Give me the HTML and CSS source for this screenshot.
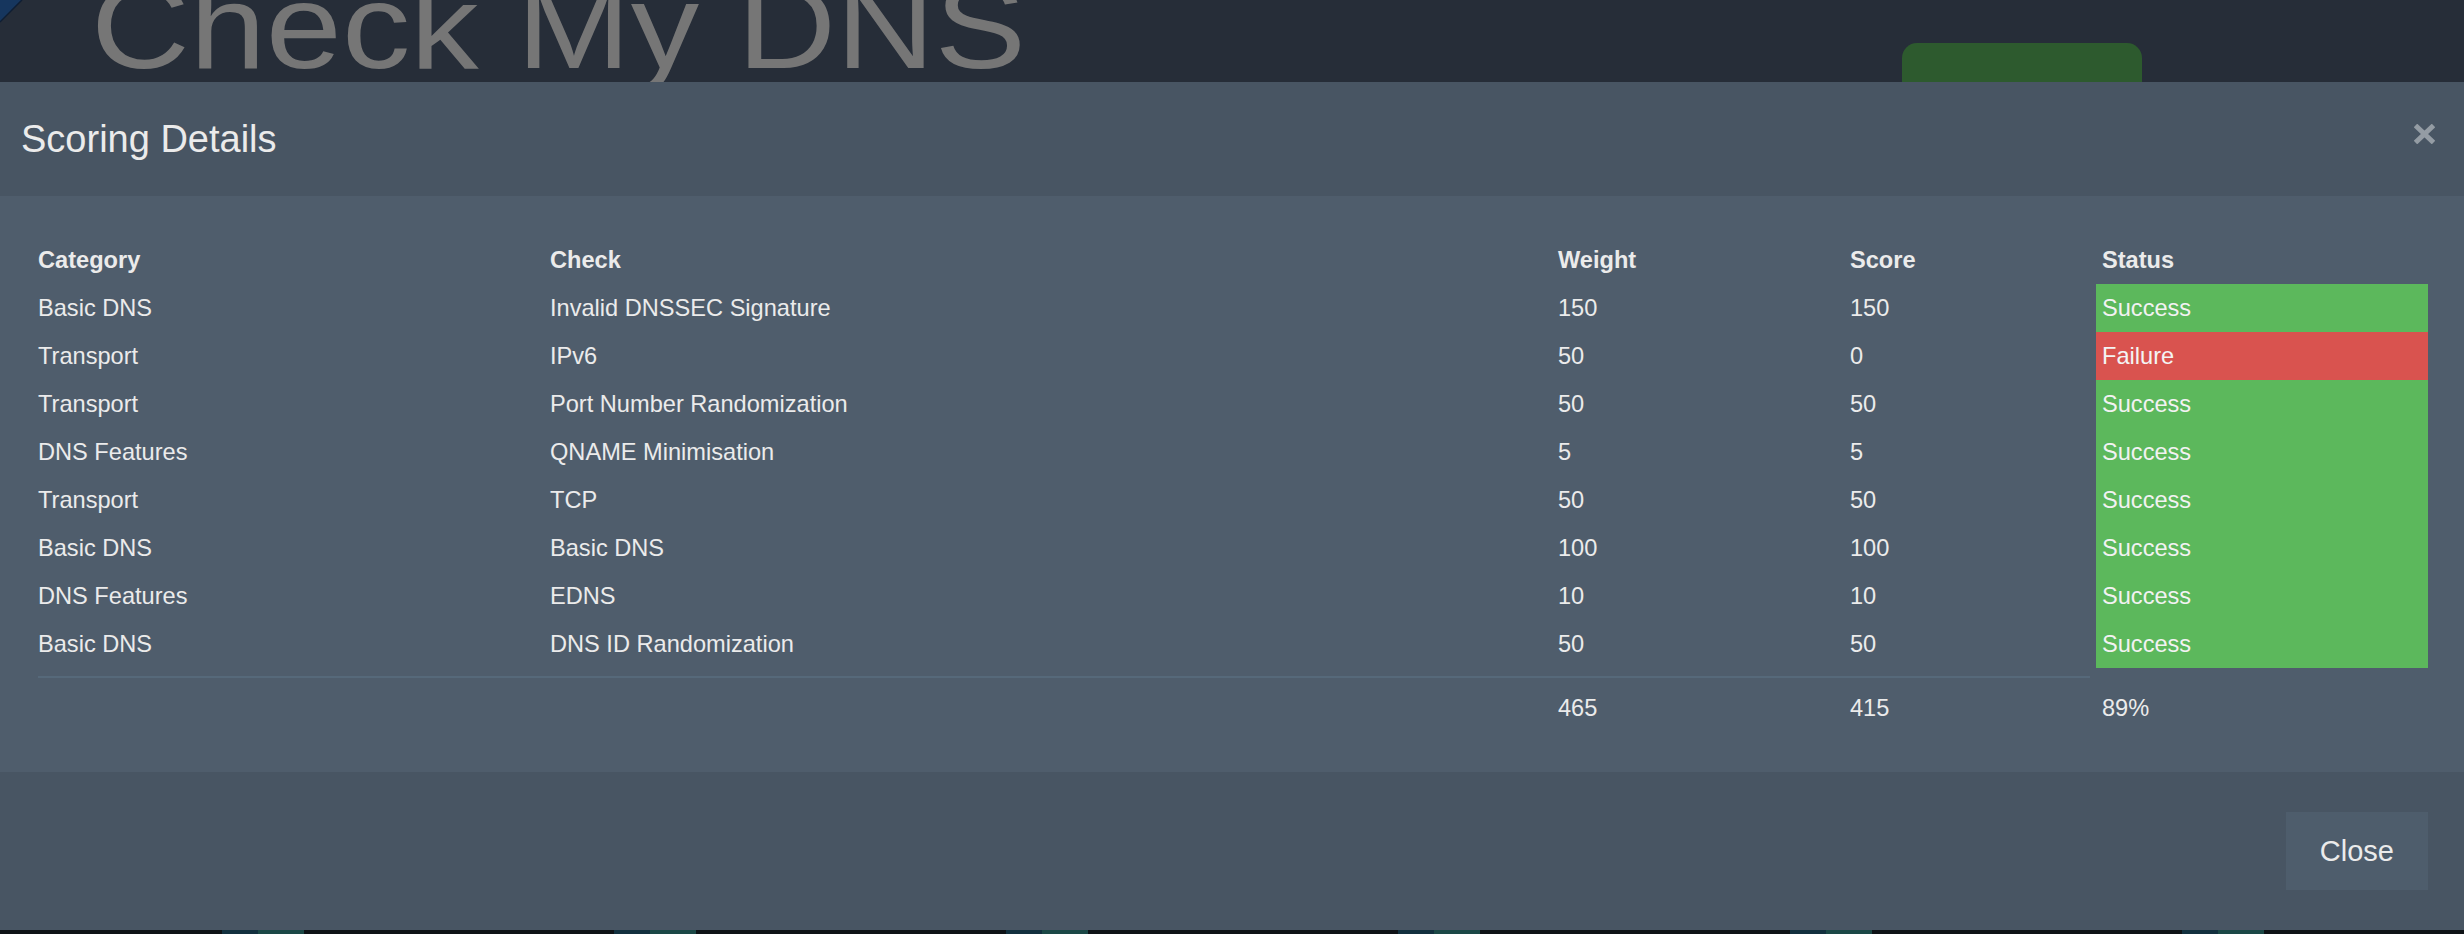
FILE: index.html
```html
<!DOCTYPE html>
<html lang="en">
<head>
<meta charset="utf-8">
<title>Check My DNS - Scoring Details</title>
<link rel="stylesheet" href="styles.css">
</head>
<body>
  <div class="page">
    <header class="topbar">
      <svg class="logo-corner" width="24" height="24" viewBox="0 0 24 24" aria-hidden="true">
        <polygon points="0,0 22,0 0,22" fill="#16365e"/>
        <polyline points="22,0 0,22" fill="none" stroke="#0f1e33" stroke-width="1.5"/>
      </svg>
      <h1 class="site-title">Check My DNS</h1>
      <div class="cta"></div>
    </header>
  </div>

  <div class="modal" role="dialog" aria-labelledby="modal-title">
    <div class="modal-header">
      <h4 class="modal-title" id="modal-title">Scoring Details</h4>
      <button class="close" type="button" aria-label="Close">
        <svg width="21" height="20" viewBox="0 0 21 20" aria-hidden="true">
          <path d="M1.5 1.5 L19.5 18.5 M19.5 1.5 L1.5 18.5" stroke="#949ca4" stroke-width="5" fill="none"/>
        </svg>
      </button>
    </div>
    <div class="modal-body">
      <table class="score-table">
        <colgroup>
          <col class="c-cat"><col class="c-check"><col class="c-weight"><col class="c-score"><col class="c-status">
        </colgroup>
        <thead>
          <tr><th>Category</th><th>Check</th><th>Weight</th><th>Score</th><th>Status</th></tr>
        </thead>
        <tbody>
          <tr><td>Basic DNS</td><td>Invalid DNSSEC Signature</td><td>150</td><td>150</td><td class="ok">Success</td></tr>
          <tr><td>Transport</td><td>IPv6</td><td>50</td><td>0</td><td class="fail">Failure</td></tr>
          <tr><td>Transport</td><td>Port Number Randomization</td><td>50</td><td>50</td><td class="ok">Success</td></tr>
          <tr><td>DNS Features</td><td>QNAME Minimisation</td><td>5</td><td>5</td><td class="ok">Success</td></tr>
          <tr><td>Transport</td><td>TCP</td><td>50</td><td>50</td><td class="ok">Success</td></tr>
          <tr><td>Basic DNS</td><td>Basic DNS</td><td>100</td><td>100</td><td class="ok">Success</td></tr>
          <tr><td>DNS Features</td><td>EDNS</td><td>10</td><td>10</td><td class="ok">Success</td></tr>
          <tr><td>Basic DNS</td><td>DNS ID Randomization</td><td>50</td><td>50</td><td class="ok">Success</td></tr>
        </tbody>
        <tfoot>
          <tr class="sep-row"><td colspan="4"><hr class="sep"></td><td></td></tr>
          <tr><td></td><td></td><td>465</td><td>415</td><td>89%</td></tr>
        </tfoot>
      </table>
    </div>
    <div class="modal-footer">
      <button class="btn" type="button">Close</button>
    </div>
  </div>
</body>
</html>
```

FILE: styles.css
```css
html, body {
  margin: 0;
  padding: 0;
}

body {
  width: 2464px;
  height: 934px;
  overflow: hidden;
  font-family: "Liberation Sans", Arial, Helvetica, sans-serif;
  color: #ebebeb;
  background-color: #0e1216;
  background-image: repeating-linear-gradient(90deg,
    #0e1216 0px, #0e1216 222px,
    #12303e 222px, #12303e 258px,
    #1b4846 258px, #1b4846 304px,
    #0e1216 304px, #0e1216 392px);
}

.page {
  height: 934px;
}

.topbar {
  position: relative;
  display: flex;
  align-items: flex-start;
  height: 130px;
  background: #262d38;
}

.logo-corner {
  position: absolute;
  left: 0;
  top: 0;
}

.site-title {
  margin: -34px 0 0 91px;
  font-size: 120px;
  line-height: 120px;
  font-weight: 400;
  color: #767676;
  white-space: nowrap;
  transform: scaleX(1.14);
  transform-origin: left center;
}

.cta {
  margin: 43px 322px 0 auto;
  width: 240px;
  height: 80px;
  border-radius: 15px;
  background: #2d5a2e;
}

/* Modal overlay */
.modal {
  position: fixed;
  top: 82px;
  left: 0;
  right: 0;
  background: #4e5d6c;
}

.modal-header {
  display: flex;
  align-items: center;
  justify-content: space-between;
  padding: 31px 29px 31px 21px;
  background: #485563;
}

.modal-title {
  margin: 0;
  font-size: 38px;
  line-height: 52px;
  font-weight: 400;
  color: #ebebeb;
}

.close {
  display: flex;
  margin: 0 0 10px 0;
  padding: 0;
  border: 0;
  background: transparent;
}

.modal-body {
  padding: 40px 36px 40px 32px;
  background: #4f5d6c;
}

.score-table {
  width: 100%;
  border-collapse: collapse;
  table-layout: fixed;
  font-size: 23.6px;
}

.c-cat { width: 512px; }
.c-check { width: 1008px; }
.c-weight { width: 292px; }
.c-score { width: 252px; }
.c-status { width: 332px; }

.score-table th,
.score-table td {
  padding: 7px 6px;
  line-height: 34px;
  text-align: left;
  vertical-align: top;
  white-space: nowrap;
}

.score-table th {
  font-weight: 700;
}

.score-table td.ok {
  background: #5cb85c;
  color: #f2f2f2;
}

.score-table td.fail {
  background: #d9534f;
  color: #f4f4f4;
}

.score-table .sep-row td {
  padding: 8px 6px 6px;
  line-height: 0;
}

.sep {
  margin: 0;
  height: 0;
  border: 0;
  border-top: 2px solid #56697a;
}

.modal-footer {
  display: flex;
  justify-content: flex-end;
  padding: 40px 36px 40px;
  background: #485563;
}

.btn {
  padding: 18px 34px;
  border: 0;
  border-radius: 0;
  background: #4e5d6c;
  color: #ebebeb;
  font-family: inherit;
  font-size: 29px;
  line-height: 42px;
}
```
